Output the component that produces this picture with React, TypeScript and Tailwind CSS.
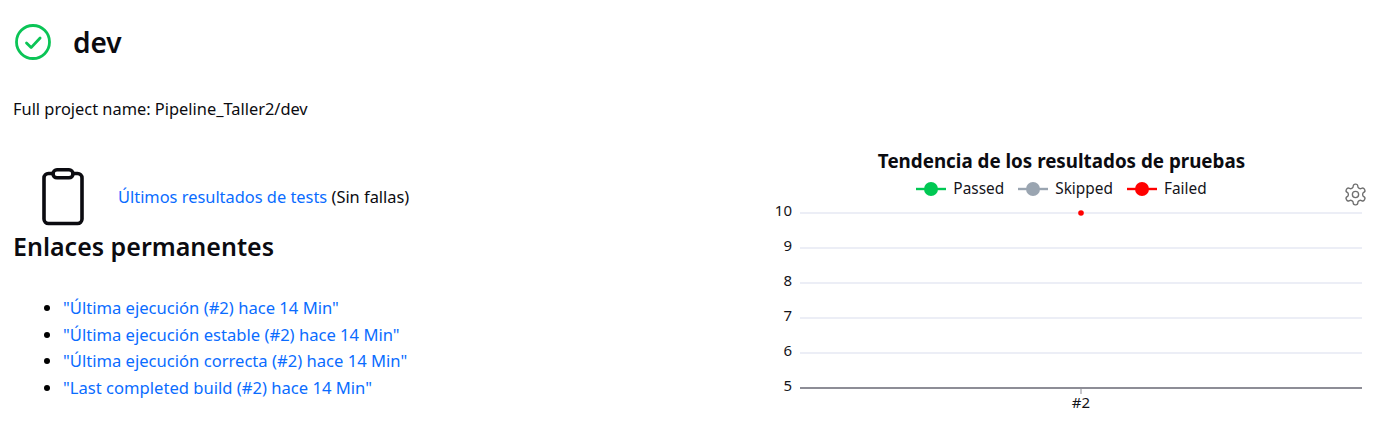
import React from "react";

const links = [
  '"Última ejecución (#2) hace 14 Min"',
  '"Última ejecución estable (#2) hace 14 Min"',
  '"Última ejecución correcta (#2) hace 14 Min"',
  '"Last completed build (#2) hace 14 Min"',
];

const legend = [
  { label: "Passed", color: "#00c853" },
  { label: "Skipped", color: "#9aa5b1" },
  { label: "Failed", color: "#ff0000" },
];

const StatusIcon = () => (
  <svg width="38" height="38" viewBox="0 0 38 38" fill="none" className="shrink-0">
    <circle cx="19" cy="19" r="16.5" stroke="#0bc456" strokeWidth="2.8" />
    <path d="M12.5 20l4.6 4.6 9-9.6" stroke="#0bc456" strokeWidth="2.8" strokeLinecap="round" strokeLinejoin="round" />
  </svg>
);

const ClipboardIcon = () => (
  <svg width="42" height="58" viewBox="0 0 42 58" fill="none" className="shrink-0">
    <path
      d="M11 5.5H6.5A4.5 4.5 0 0 0 2 10v41a4.5 4.5 0 0 0 4.5 4.5h29A4.5 4.5 0 0 0 40 51V10a4.5 4.5 0 0 0-4.5-4.5H31"
      stroke="#0b0b10"
      strokeWidth="3.6"
      strokeLinecap="round"
    />
    <rect x="11" y="1.8" width="20" height="8" rx="4" stroke="#0b0b10" strokeWidth="3.6" />
  </svg>
);

const GearIcon = () => (
  <svg width="25" height="25" viewBox="0 0 24 24" fill="none" stroke="#6f6f6f" strokeWidth="1.3" strokeLinecap="round" strokeLinejoin="round">
    <path d="M12.22 2h-.44a2 2 0 0 0-2 2v.18a2 2 0 0 1-1 1.73l-.43.25a2 2 0 0 1-2 0l-.15-.08a2 2 0 0 0-2.73.73l-.22.38a2 2 0 0 0 .73 2.73l.15.1a2 2 0 0 1 1 1.72v.51a2 2 0 0 1-1 1.74l-.15.09a2 2 0 0 0-.73 2.73l.22.38a2 2 0 0 0 2.73.73l.15-.08a2 2 0 0 1 2 0l.43.25a2 2 0 0 1 1 1.73V20a2 2 0 0 0 2 2h.44a2 2 0 0 0 2-2v-.18a2 2 0 0 1 1-1.73l.43-.25a2 2 0 0 1 2 0l.15.08a2 2 0 0 0 2.73-.73l.22-.39a2 2 0 0 0-.73-2.73l-.15-.08a2 2 0 0 1-1-1.74v-.5a2 2 0 0 1 1-1.74l.15-.09a2 2 0 0 0 .73-2.73l-.22-.38a2 2 0 0 0-2.73-.73l-.15.08a2 2 0 0 1-2 0l-.43-.25a2 2 0 0 1-1-1.73V4a2 2 0 0 0-2-2z" />
    <circle cx="12" cy="12" r="3" />
  </svg>
);

const LegendMark = ({ color }: { color: string }) => (
  <svg width="30" height="14" viewBox="0 0 30 14">
    <line x1="0" y1="7" x2="30" y2="7" stroke={color} strokeWidth="2.4" />
    <circle cx="15" cy="7" r="7" fill={color} />
  </svg>
);

const Chart = () => {
  const ticks = [10, 9, 8, 7, 6];
  const y = (v: number) => 13 + (10 - v) * 35;
  return (
    <div className="relative w-[626px] -mr-[13px] pt-[14px]">
      <h2 className="text-center text-[18.8px] leading-[24px] font-bold text-[#0b0b10] pr-[23px]">
        Tendencia de los resultados de pruebas
      </h2>
      <ul className="flex justify-center gap-[14px] mt-[5px] mb-[1px] h-[21px] items-center pr-[23px]">
        {legend.map((item) => (
          <li key={item.label} className="flex items-center gap-[7px] text-[15.4px] text-[#14141a]">
            <LegendMark color={item.color} />
            {item.label}
          </li>
        ))}
      </ul>
      <button className="absolute right-[18px] top-[47px]">
        <GearIcon />
      </button>
      <svg width="626" height="220" viewBox="0 0 626 220">
        {ticks.map((v) => (
          <g key={v}>
            <line x1="40" x2="602" y1={y(v)} y2={y(v)} stroke="#eceef6" strokeWidth="2" />
            <text x="32" y={y(v) + 3} textAnchor="end" fontSize="15" fill="#14141a">
              {v}
            </text>
          </g>
        ))}
        <line x1="40" x2="602" y1={y(5)} y2={y(5)} stroke="#8d8d96" strokeWidth="2" />
        <line x1="321" x2="321" y1={y(5)} y2={y(5) + 6} stroke="#8d8d96" strokeWidth="1" />
        <text x="32" y={y(5) + 3} textAnchor="end" fontSize="15" fill="#14141a">
          5
        </text>
        <text x="321" y={y(5) + 20} textAnchor="middle" fontSize="15" fill="#14141a">
          #2
        </text>
        <circle cx="321" cy={y(10)} r="2.8" fill="#ff0000" />
      </svg>
    </div>
  );
};

export default function App() {
  return (
    <main className="font-['Noto_Sans','Open_Sans',sans-serif] min-h-[437px] bg-white px-[13px] text-[16.4px] text-[#0b0b10] overflow-hidden">
      <header className="flex items-center gap-[21px] pt-[21px] h-[62px] pl-[1px]">
        <StatusIcon />
        <h1 className="text-[28px] font-semibold leading-[38px]">dev</h1>
      </header>
      <p className="mt-[36px] leading-[22px]">Full project name: Pipeline_Taller2/dev</p>
      <div className="flex justify-between mt-[15px]">
        <section className="pt-[33px]">
          <div className="flex items-center pl-[29px] gap-[34px]">
            <ClipboardIcon />
            <p className="leading-[22px]">
              <a href="#" className="text-[#0a6cff]">Últimos resultados de tests</a> (Sin fallas)
            </p>
          </div>
          <h2 className="text-[25px] font-semibold leading-[34px] mt-[3px]">Enlaces permanentes</h2>
          <ul className="list-disc pl-[50px] mt-[32px] text-[16.6px] leading-[26.5px] marker:text-black">
            {links.map((link) => (
              <li key={link}>
                <a href="#" className="text-[#0a6cff]">{link}</a>
              </li>
            ))}
          </ul>
        </section>
        <Chart />
      </div>
    </main>
  );
}
